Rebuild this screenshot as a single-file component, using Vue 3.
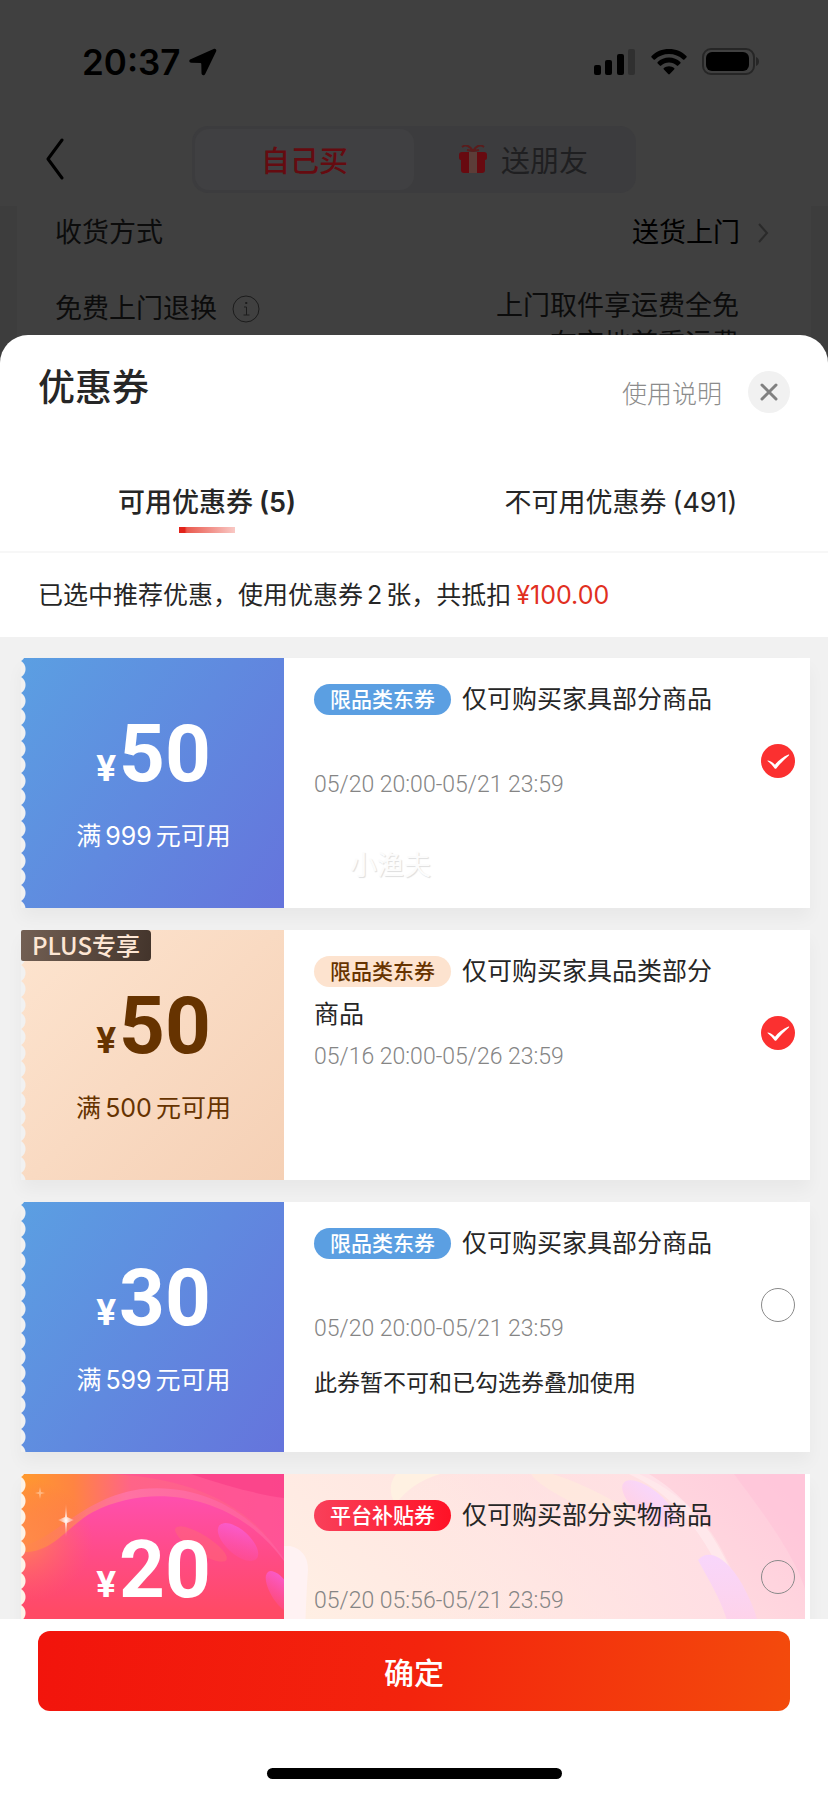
<script setup>
import { ref } from 'vue'

const tab = ref('usable')

const coupons = ref([
  { id: 1, theme: 'blue', amount: 50, min: 999, badge: '限品类东券', title: '仅可购买家具部分商品', period: '05/20 20:00-05/21 23:59', mark: '小渔夫', picked: true },
  { id: 2, theme: 'plus', ribbon: 'PLUS专享', amount: 50, min: 500, badge: '限品类东券', title: '仅可购买家具品类部分商品', period: '05/16 20:00-05/26 23:59', picked: true },
  { id: 3, theme: 'blue', amount: 30, min: 599, badge: '限品类东券', title: '仅可购买家具部分商品', period: '05/20 20:00-05/21 23:59', note: '此券暂不可和已勾选券叠加使用', picked: false },
  { id: 4, theme: 'rose', amount: 20, badge: '平台补贴券', title: '仅可购买部分实物商品', period: '05/20 05:56-05/21 23:59', picked: false },
])
</script>

<template>
  <div class="screen">
    <div class="checkout">
      <div class="status">
        <div class="status-left">
          <span class="clock">20:37</span>
          <svg class="locate" viewBox="0 0 28 28" aria-hidden="true">
            <path d="M24.600.9 1.600 11.200c-2 .9-1.500 3.400.6 3.500l9.200.3c.6 0 .9.3.9.9l.2 9.300c.1 2.200 2.800 2.700 3.700.7L27.100 3.400c.8-1.800-.7-3.300-2.500-2.500z" />
          </svg>
        </div>
        <div class="status-right">
          <svg class="signal" viewBox="0 0 42 27" aria-hidden="true">
            <rect x="0" y="16" width="7" height="10" rx="2" />
            <rect x="11" y="11" width="7" height="15" rx="2" />
            <rect x="23" y="5" width="7" height="21" rx="2" />
            <rect class="faint" x="34" y="0" width="7" height="26" rx="2" />
          </svg>
          <svg class="wifi" viewBox="0 0 36 26" aria-hidden="true">
            <path d="M18 0C11 0 5 2.600.6 7c-.5.500-.5 1 0 1.500l2 2c.4.400 1 .4 1.400 0C7.800 6.900 12.700 5 18 5s10.200 1.900 14 5.500c.4.400 1 .4 1.400 0l2-2c.5-.5.500-1 0-1.500C31 2.600 25 0 18 0z" />
            <path d="M18 8.600c-4.300 0-8.300 1.600-11.300 4.400-.5.500-.5 1 0 1.500l2.100 2.100c.4.400.9.400 1.400 0 2.100-1.900 4.900-3 7.800-3s5.700 1.100 7.800 3c.5.400 1 .4 1.400 0l2.100-2.100c.5-.5.500-1 0-1.500-3-2.800-7-4.400-11.300-4.400z" />
            <path d="M18 17.200c-1.900 0-3.700.7-5.100 1.800-.5.400-.5 1 0 1.500l4.300 4.500c.5.500 1.100.5 1.600 0l4.300-4.500c.5-.5.500-1.100 0-1.500-1.400-1.100-3.200-1.800-5.100-1.800z" />
          </svg>
          <svg class="battery" viewBox="0 0 58 28" aria-hidden="true">
            <rect class="shell" x="1" y="1" width="51" height="25" rx="8" />
            <rect x="4" y="4" width="43" height="19" rx="6" />
            <path class="knob" d="M54 9c2 .8 3 2.500 3 4.500s-1 3.700-3 4.500z" />
          </svg>
        </div>
      </div>

      <div class="nav">
        <button class="back" aria-label="返回">
          <svg viewBox="0 0 20 42" aria-hidden="true"><path d="M17 2 3 21l14 19" /></svg>
        </button>
        <div class="switch">
          <button class="switch-item on">自己买</button>
          <button class="switch-item">
            <svg class="gift" viewBox="0 0 28 28" aria-hidden="true">
              <path d="M3 7h22q3 0 3 3v3q0 2-2 2v10q0 3-3 3H5q-3 0-3-3V15q-2 0-2-2v-3q0-3 3-3z" fill="#680a10" />
              <path d="M10 7h8v21h-8z" fill="#5c3d38" />
              <path d="M14 6C11 1 7-1 3 2M14 6c3-5 7-7 11-4M14 6 8 5M14 6l6-1" fill="none" stroke="#5a1c1c" stroke-width="2" />
            </svg>
            <span>送朋友</span>
          </button>
        </div>
      </div>

      <div class="delivery">
        <div class="row">
          <span>收货方式</span>
          <a class="value" href="#">
            送货上门
            <svg class="more" viewBox="0 0 12 22" aria-hidden="true"><path d="m2 2 8 9-8 9" /></svg>
          </a>
        </div>
        <div class="row tall">
          <span class="with-info">
            免费上门退换
            <svg class="info" viewBox="0 0 28 28" aria-hidden="true">
              <circle cx="14" cy="14" r="13" />
              <path d="M12 12h2.500v8M11.500 20h6M13.500 7.500h1.500v1h-1.500z" />
            </svg>
          </span>
          <span class="policy">上门取件享运费全免<br>在京地首重运费</span>
        </div>
      </div>
    </div>

    <div class="mask">
      <section class="sheet" aria-label="优惠券">
        <header class="sheet-head">
          <h1>优惠券</h1>
          <div class="head-tools">
            <a class="help" href="#">使用说明</a>
            <button class="close" aria-label="关闭">
              <svg viewBox="0 0 18 18" aria-hidden="true"><path d="m2 2 14 14M16 2 2 16" /></svg>
            </button>
          </div>
        </header>

        <div class="tabs" role="tablist">
          <button class="tab" :class="{ active: tab === 'usable' }" role="tab" @click="tab = 'usable'">
            可用优惠券<span class="count">(5)</span>
          </button>
          <button class="tab" :class="{ active: tab === 'unusable' }" role="tab" @click="tab = 'unusable'">
            不可用优惠券<span class="count">(491)</span>
          </button>
        </div>

        <p class="summary">已选中推荐优惠，使用优惠券<span class="num">2</span>张，共抵扣<span class="off">¥100.00</span></p>

        <div class="list">
          <label v-for="c in coupons" :key="c.id" class="coupon" :class="c.theme">
            <span class="panel">
              <svg v-if="c.theme === 'rose'" class="art" viewBox="0 0 263 250" preserveAspectRatio="xMidYMin slice" aria-hidden="true">
                <defs>
                  <linearGradient id="ground" x1="0" y1="0" x2="1" y2="0">
                    <stop offset="0" stop-color="#ff9a2e" />
                    <stop offset=".2" stop-color="#ff8442" />
                    <stop offset=".42" stop-color="#ff6488" />
                    <stop offset="1" stop-color="#ff5a94" />
                  </linearGradient>
                  <linearGradient id="hill" x1="0" y1="0" x2="0" y2="1">
                    <stop offset="0" stop-color="#ff4fae" />
                    <stop offset=".25" stop-color="#ff4b88" />
                    <stop offset=".5" stop-color="#ff4a66" />
                    <stop offset="1" stop-color="#ff4a50" />
                  </linearGradient>
                  <linearGradient id="rim" x1="0" y1="0" x2="1" y2="0">
                    <stop offset="0" stop-color="#ff7a62" stop-opacity=".3" />
                    <stop offset=".4" stop-color="#ff74a6" stop-opacity=".9" />
                    <stop offset="1" stop-color="#ff5c9c" />
                  </linearGradient>
                  <linearGradient id="drop" x1="0" y1="0" x2="1" y2="1">
                    <stop offset="0" stop-color="#f95fd8" />
                    <stop offset="1" stop-color="#fb4da6" stop-opacity=".2" />
                  </linearGradient>
                  <radialGradient id="glow">
                    <stop offset="0" stop-color="#ff8a4c" stop-opacity=".9" />
                    <stop offset="1" stop-color="#ff6a5c" stop-opacity="0" />
                  </radialGradient>
                  <radialGradient id="spark">
                    <stop offset="0" stop-color="#fff" />
                    <stop offset="1" stop-color="#ffd0c8" stop-opacity=".3" />
                  </radialGradient>
                </defs>
                <rect width="263" height="250" fill="url(#ground)" />
                <path d="M90 0h173v86C230 30 170 4 90 0z" fill="#ff4c98" opacity=".45" />
                <path d="M170 0h93v24C235 20 205 12 170 0z" fill="#fa3f88" opacity=".7" />
                <path d="M0 72C34 66 60 24 120 15c60-6 110 22 143 70v30H0z" fill="url(#rim)" />
                <path d="M0 78c32 2 46-26 72-40 62-32 145-15 191 49v163H0z" fill="url(#hill)" />
                <ellipse cx="0" cy="66" rx="72" ry="62" fill="url(#glow)" />
                <ellipse cx="180" cy="70" rx="30" ry="9" transform="rotate(32 180 70)" fill="#ff6b73" opacity=".45" />
                <ellipse cx="217" cy="68" rx="25" ry="12" transform="rotate(42 217 68)" fill="url(#drop)" />
                <ellipse cx="260" cy="118" rx="24" ry="10" transform="rotate(58 260 118)" fill="url(#drop)" />
                <path d="m45 30 1 13 7 3-7 3-1 14-1-14-7-3 7-3z" fill="url(#spark)" />
                <path d="m19 13 1 5 4 1-4 1-1 5-1-5-4-1 4-1z" fill="#ffb984" />
              </svg>
              <span v-if="c.ribbon" class="ribbon">{{ c.ribbon }}</span>
              <span class="amount"><small>¥</small>{{ c.amount }}</span>
              <span v-if="c.min" class="condition">满<span class="num">{{ c.min }}</span>元可用</span>
            </span>
            <span class="body">
              <svg v-if="c.theme === 'rose'" class="art" viewBox="0 0 521 250" preserveAspectRatio="none" aria-hidden="true">
                <defs>
                  <linearGradient id="wash" x1="0" y1=".6" x2="1" y2=".1">
                    <stop offset="0" stop-color="#fff0e4" />
                    <stop offset=".45" stop-color="#ffe6e2" />
                    <stop offset="1" stop-color="#ffcbdc" />
                  </linearGradient>
                  <linearGradient id="dome" x1="0" y1="0" x2="1" y2="0">
                    <stop offset="0" stop-color="#ffe9e4" stop-opacity="0" />
                    <stop offset=".6" stop-color="#ffe4e4" stop-opacity=".7" />
                    <stop offset="1" stop-color="#ffdde4" />
                  </linearGradient>
                  <linearGradient id="petal" x1="0" y1="0" x2="0" y2="1">
                    <stop offset="0" stop-color="#f8d6fb" />
                    <stop offset="1" stop-color="#ffd2e6" />
                  </linearGradient>
                </defs>
                <rect width="521" height="250" fill="url(#wash)" />
                <path d="M110 34C130 10 150 3 175 0h180c75 35 110 95 125 250H110z" fill="url(#dome)" />
                <path d="M112 0h44c-20 6-34 16-44 30-8-10-6-22 0-30z" fill="#fff1e2" />
                <path d="M345 0c55 25 85 75 112 145h8C445 80 415 30 365 0z" fill="#fff" opacity=".3" />
                <path d="M450 0c30 40 60 80 71 115V0z" fill="#ffbfd6" opacity=".4" />
                <ellipse cx="300" cy="23" rx="58" ry="10" transform="rotate(25 300 23)" fill="#ffecdc" opacity=".6" />
                <ellipse cx="365" cy="30" rx="33" ry="14" transform="rotate(40 365 30)" fill="url(#petal)" />
                <path d="M414 86c12-14 32 2 44 24 10 18 16 34 18 50h-30c-4-26-18-48-32-74z" fill="url(#petal)" />
                <path d="M0 72h6q18 4 18 24-4 54-4 154H0z" fill="#fff2f3" />
              </svg>
              <span class="text">
                <span class="title"><em class="badge">{{ c.badge }}</em>{{ c.title }}</span>
                <span class="period">{{ c.period }}</span>
                <span v-if="c.note" class="note">{{ c.note }}</span>
                <span v-if="c.mark" class="watermark">{{ c.mark }}</span>
              </span>
              <span class="pick">
                <input v-model="c.picked" type="checkbox">
                <svg viewBox="0 0 34 34" aria-hidden="true">
                  <path d="M7 16.500c2.500.5 5 2 7 4.200 3-3.900 8-8 13.500-10.200.7-.2.900.4.400.9C23 15.500 19 20 15.500 24.200c-.7.800-1.400.8-2 0-2-2.700-4.200-5-6.700-6.900-.5-.4-.4-.9.200-.8z" />
                </svg>
              </span>
            </span>
          </label>
        </div>

        <footer class="actions">
          <button class="confirm">确定</button>
          <div class="home-bar"></div>
        </footer>
      </section>
    </div>
  </div>
</template>

<style>
body {
  margin: 0;
  background: #404040;
}
</style>

<style scoped>
.screen {
  position: relative;
  height: 100vh;
  overflow: hidden;
  background: #404040;
  color: #262626;
  font-family: Inter, "Noto Sans CJK SC", sans-serif;
  font-size: 25px;
}
.screen * {
  box-sizing: border-box;
}
button {
  margin: 0;
  padding: 0;
  border: 0;
  background: none;
  color: inherit;
  font: inherit;
  cursor: pointer;
}
a {
  color: inherit;
  text-decoration: none;
}
svg {
  display: block;
  flex: none;
}

/* dimmed checkout page */
.checkout {
  color: #0c0c0c;
}
.status {
  display: flex;
  justify-content: space-between;
  align-items: center;
  height: 124px;
  padding: 0 68px 0 82px;
  color: #000;
}
.status-left,
.status-right {
  display: flex;
  align-items: center;
}
.status-left {
  gap: 8px;
}
.status-right {
  gap: 15px;
}
.clock {
  font-size: 35px;
  font-weight: 600;
  line-height: 40px;
}
.locate {
  width: 28px;
  height: 28px;
}
.signal {
  width: 42px;
  height: 27px;
}
.faint {
  fill: #303030;
}
.wifi {
  width: 36px;
  height: 26px;
}
.battery {
  width: 58px;
  height: 28px;
}
.shell {
  fill: none;
  stroke: #262626;
  stroke-width: 2;
}
.knob {
  fill: #262626;
}
.nav {
  position: relative;
  display: flex;
  justify-content: center;
  height: 82px;
  padding-top: 2px;
}
.back {
  position: absolute;
  left: 45px;
  top: 14px;
}
.back svg {
  width: 20px;
  height: 42px;
  fill: none;
  stroke: #000;
  stroke-width: 3;
  stroke-linecap: round;
  stroke-linejoin: round;
}
.switch {
  display: flex;
  width: 444px;
  height: 67px;
  padding: 3px;
  border-radius: 16px;
  background: #3c3c3e;
  font-size: 29px;
}
.switch-item {
  display: flex;
  flex: 1;
  align-items: center;
  justify-content: center;
  gap: 14px;
  padding-bottom: 2px;
  border-radius: 14px;
  color: #1f1f21;
}
.switch-item.on {
  background: #404042;
  color: #650b10;
  font-weight: 500;
}
.gift {
  width: 28px;
  height: 28px;
}
.delivery {
  padding: 8px 38px 0;
  border: solid #3d3d3d;
  border-width: 0 17px;
  height: 300px;
  font-size: 27px;
}
.row {
  display: flex;
  justify-content: space-between;
  line-height: 38px;
}
.row.tall {
  margin-top: 35px;
}
.value,
.with-info {
  display: flex;
  align-items: center;
}
.value {
  gap: 17px;
  padding-right: 4px;
  color: #000;
}
.more {
  width: 12px;
  height: 22px;
  fill: none;
  stroke: #2a2a2a;
  stroke-width: 2;
}
.with-info {
  gap: 15px;
  align-self: flex-start;
  padding-top: 3px;
}
.info {
  width: 28px;
  height: 28px;
  fill: none;
  stroke: #1c1c1c;
  stroke-width: 1;
}
.policy {
  padding-right: 34px;
  text-align: right;
}

/* coupon sheet */
.mask {
  position: absolute;
  inset: 0;
  display: flex;
  flex-direction: column;
  padding-top: 335px;
}
.sheet {
  display: flex;
  flex: 1;
  flex-direction: column;
  min-height: 0;
  border-radius: 28px 28px 0 0;
  background: #fff;
  overflow: hidden;
}
.sheet-head {
  display: flex;
  justify-content: space-between;
  padding: 28px 38px 0;
}
h1 {
  margin: 0;
  font-size: 37px;
  font-weight: 500;
  line-height: 50px;
}
.head-tools {
  display: flex;
  align-items: center;
  gap: 26px;
  margin-top: 8px;
  height: 42px;
}
.help {
  color: #8c8c8c;
  font-weight: 300;
}
.close {
  display: grid;
  place-items: center;
  width: 42px;
  height: 42px;
  border-radius: 50%;
  background: #f1f1f1;
}
.close svg {
  width: 18px;
  height: 18px;
  fill: none;
  stroke: #808080;
  stroke-width: 3;
  stroke-linecap: round;
}
.tabs {
  display: flex;
  margin-top: 62px;
  border-bottom: 2px solid #f7f7f7;
}
.tab {
  position: relative;
  flex: 1;
  height: 76px;
  padding-bottom: 26px;
  font-size: 27px;
}
.tab.active {
  font-weight: 500;
}
.tab.active .count {
  font-weight: 600;
}
.tab.active::after {
  content: "";
  position: absolute;
  left: 50%;
  bottom: 18px;
  width: 56px;
  height: 6px;
  margin-left: -28px;
  background: linear-gradient(90deg, #e2231a 0 10%, #ea5a4f 14%, #f9c9c5);
}
.count {
  margin-left: 6px;
}
.summary {
  margin: 0;
  padding: 0 38px;
  line-height: 84px;
}
.num {
  margin: 0 4px;
}
.off {
  margin-left: 5px;
  color: #e1301f;
}
.list {
  display: flex;
  flex: 1;
  flex-direction: column;
  gap: 22px;
  min-height: 0;
  padding: 21px 18px 0 21px;
  background: #f1f1f1;
  overflow: hidden;
}
.coupon {
  display: flex;
  flex: none;
  min-height: 250px;
  background: #fff;
  box-shadow: 0 10px 16px rgba(0, 0, 0, 0.04);
}
.panel {
  position: relative;
  display: flex;
  flex: none;
  flex-direction: column;
  align-items: center;
  width: 263px;
  padding: 56px 0 0 2px;
  color: #fff;
}
.panel::before {
  content: "";
  position: absolute;
  inset: 0 auto 0 0;
  width: 6px;
  background: radial-gradient(circle at -5px 8px, #f1f1f1 9px, transparent 10px) 0 3px / 6px 16px repeat-y;
}
.blue .panel {
  background: linear-gradient(125deg, #5b9fe2, #6574dc);
}
.plus .panel {
  background: linear-gradient(135deg, #fde4cf, #f5d0b5);
  color: #663300;
}
.rose .panel {
  background: #ff4a5e;
}
.rose .panel::before {
  background: radial-gradient(circle at -5px 8px, #fdf3e8 9px, transparent 10px) 0 3px / 6px 16px repeat-y;
}
.art {
  position: absolute;
  inset: 0;
  width: 100%;
  height: 100%;
}
.panel::before,
.amount {
  z-index: 1;
}
.ribbon {
  position: absolute;
  left: 0;
  top: 0;
  z-index: 2;
  height: 31px;
  padding: 0 11px;
  border-radius: 2px 4px 4px 2px;
  background: linear-gradient(100deg, #736054, #43342b);
  color: #fde6d4;
  font-family: "Noto Sans CJK SC", sans-serif;
  font-size: 24px;
  font-weight: 500;
  line-height: 29px;
}
.amount {
  position: relative;
  font-family: Roboto, sans-serif;
  font-size: 80px;
  font-weight: 700;
  line-height: 80px;
}
.amount small {
  margin-right: 3px;
  font-size: 37px;
  line-height: 37px;
}
.condition {
  margin-top: 24px;
  line-height: 36px;
}
.body {
  position: relative;
  display: flex;
  flex: 1;
  min-width: 0;
  padding: 20px 15px 20px 30px;
}
.rose .body .art {
  width: calc(100% - 5px);
}
.text {
  position: relative;
  display: flex;
  flex: 1;
  flex-direction: column;
  margin-right: 40px;
}
.title {
  min-height: 86px;
  line-height: 43px;
}
.badge {
  display: inline-block;
  margin-right: 11px;
  padding: 0 16px;
  border-radius: 16px;
  font-size: 21px;
  font-style: normal;
  font-weight: 500;
  line-height: 31px;
  vertical-align: 1px;
}
.blue .badge {
  background: #5b9fe2;
  color: #fff;
}
.plus .badge {
  background: #fde3cf;
  color: #663300;
}
.rose .badge {
  background: linear-gradient(90deg, #f9405a, #ff1226);
  color: #fff;
}
.period {
  color: #858585;
  font-family: Roboto, sans-serif;
  font-size: 23px;
  font-weight: 300;
  line-height: 42px;
}
.note {
  margin-top: 17px;
  font-size: 23px;
  line-height: 32px;
}
.pick {
  position: relative;
  flex: none;
  width: 34px;
  height: 34px;
  margin-top: 66px;
}
.pick input {
  display: block;
  width: 34px;
  height: 34px;
  margin: 0;
  border: 1px solid #8a8a8a;
  border-radius: 50%;
  appearance: none;
}
.pick svg {
  position: absolute;
  inset: 0;
  visibility: hidden;
  fill: #fff;
  pointer-events: none;
}
.pick input:checked {
  border: 0;
  background: #fb3030;
}
.pick input:checked + svg {
  visibility: visible;
}
.watermark {
  margin: 42px 0 0 36px;
  color: #fcfcfc;
  font-size: 27px;
  line-height: 36px;
  text-shadow: 1px 1px 1px #dedede;
}
.actions {
  display: flex;
  flex-direction: column;
  align-items: center;
  padding: 12px 38px 17px;
}
.confirm {
  width: 100%;
  height: 80px;
  border-radius: 12px;
  background: linear-gradient(100deg, #f2140c, #f3240d 50%, #f34b0c);
  color: #fff;
  font-size: 30px;
  font-weight: 500;
}
.home-bar {
  width: 295px;
  height: 11px;
  margin-top: 57px;
  border-radius: 6px;
  background: #000;
}
</style>
